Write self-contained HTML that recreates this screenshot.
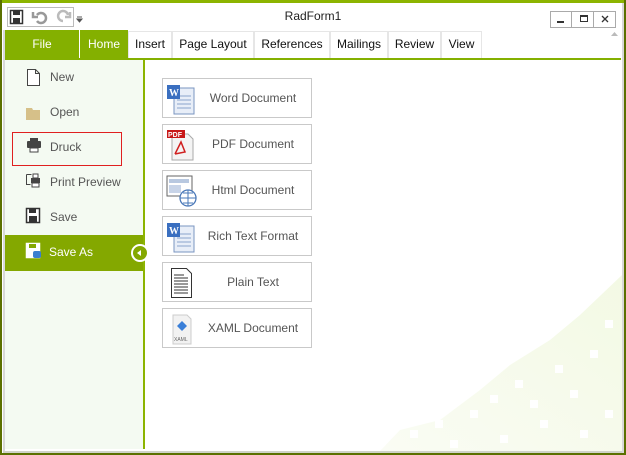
<!DOCTYPE html>
<html><head><meta charset="utf-8"><style>
*{margin:0;padding:0;box-sizing:border-box}
body{width:626px;height:455px;overflow:hidden;background:#fff;font-family:"Segoe UI","Liberation Sans",sans-serif;font-size:12px;color:#333;position:relative}
.abs{position:absolute}
.tab{position:absolute;top:31px;height:27px;background:#fff;border:1px solid #e6e6e6;border-bottom:none;line-height:25px;text-align:center;color:#111;font-size:12px}
.item{position:absolute;left:5px;width:138px;height:35px;line-height:35px;padding-left:45px;color:#555;font-size:12px}
.btn{position:absolute;left:162px;width:150px;height:40px;border:1px solid #c9c9c9;background:#fff;line-height:38px;font-size:12px;color:#555}
.btn span{position:absolute;left:0;right:0;padding-left:32px;text-align:center}
.btn svg{position:absolute;left:2px;top:3px}
</style></head><body>
<div class="abs" style="left:0;top:0;width:626px;height:3px;background:#8cb400"></div>
<div class="abs" style="left:0;top:0;width:2px;height:455px;background:#5b7000"></div>
<div class="abs" style="right:0;top:0;width:2px;height:455px;background:#5b7000"></div>
<div class="abs" style="left:0;bottom:0;width:626px;height:2px;background:#5b7000"></div>
<div class="abs" style="left:3px;bottom:2px;width:620px;height:2px;background:#cfd3c8"></div>
<div class="abs" style="right:2px;top:3px;width:2px;height:450px;background:#d8d8d8"></div>
<div class="abs" style="left:3px;top:30px;width:2px;height:421px;background:#d8d8d8"></div>
<div class="abs" style="left:7px;top:7px;width:67px;height:20px;border:1px solid #bbb"></div>
<svg class="abs" style="left:9px;top:9px" width="80" height="16">
<rect x="1.5" y="1.5" width="12" height="13" fill="#fff" stroke="#333" stroke-width="1.5"/><rect x="4" y="2" width="7" height="4" fill="#333"/><rect x="4" y="9" width="7" height="5" fill="#333"/>
<path d="M28 6 a5 5 0 1 1 0 6 M24 3 v5 h5" fill="none" stroke="#999" stroke-width="2.5"/>
<path d="M54 12 a5 5 0 1 1 5 -6 M61 3 v5 h-5" fill="none" stroke="#bbb" stroke-width="2.5"/>
<path d="M68 8 h5 M68 10 l2.5 3 l2.5 -3z" stroke="#555" fill="#555"/>
</svg>
<div class="abs" style="left:0;width:626px;top:9px;text-align:center;font-size:12px;color:#222">RadForm1</div>
<div class="abs" style="left:550px;top:11px;width:22px;height:17px;border:1px solid #aaa"></div>
<div class="abs" style="left:572px;top:11px;width:22px;height:17px;border:1px solid #aaa;border-left:none"></div>
<div class="abs" style="left:594px;top:11px;width:22px;height:17px;border:1px solid #aaa;border-left:none"></div>
<div class="abs" style="left:557px;top:21px;width:7px;height:2px;background:#333"></div>
<div class="abs" style="left:580px;top:15px;width:8px;height:7px;border:1px solid #333;border-top-width:2px"></div>
<svg class="abs" style="left:601px;top:15px" width="8" height="8"><path d="M1 1L7 7M7 1L1 7" stroke="#333" stroke-width="1.3"/></svg>
<svg class="abs" style="left:610px;top:31px" width="9" height="6"><path d="M1 5 L4.5 1 L8 5z" fill="#bbb"/></svg>
<div class="abs" style="left:5px;top:30px;width:74px;height:29px;background:#84b000;color:#fff;line-height:29px;text-align:center;font-size:12px">File</div>
<div class="abs" style="left:80px;top:30px;width:48px;height:29px;background:#84b000;color:#fff;line-height:29px;text-align:center">Home</div>
<div class="tab" style="left:128px;width:44px">Insert</div>
<div class="tab" style="left:172px;width:82px">Page Layout</div>
<div class="tab" style="left:254px;width:76px">References</div>
<div class="tab" style="left:330px;width:58px">Mailings</div>
<div class="tab" style="left:388px;width:53px">Review</div>
<div class="tab" style="left:441px;width:41px">View</div>
<div class="abs" style="left:5px;top:58px;width:616px;height:2px;background:#84b000"></div>
<svg class="abs" style="left:380px;top:270px" width="242" height="181">
<defs><linearGradient id="g" x1="0" y1="1" x2="1" y2="0"><stop offset="0" stop-color="#fafcf4"/><stop offset="1" stop-color="#f3f9e4"/></linearGradient></defs>
<path d="M0 181 L20 160 L60 150 L100 120 L130 95 L170 70 L200 45 L242 5 L242 181Z" fill="url(#g)"/>
<g fill="#fff">
<rect x="30" y="160" width="8" height="8"/><rect x="55" y="150" width="8" height="8"/><rect x="90" y="140" width="8" height="8"/><rect x="110" y="125" width="8" height="8"/><rect x="135" y="110" width="8" height="8"/><rect x="150" y="130" width="8" height="8"/><rect x="175" y="95" width="8" height="8"/><rect x="190" y="120" width="8" height="8"/><rect x="210" y="80" width="8" height="8"/><rect x="225" y="140" width="8" height="8"/><rect x="200" y="160" width="8" height="8"/><rect x="160" y="150" width="8" height="8"/><rect x="120" y="165" width="8" height="8"/><rect x="225" y="50" width="8" height="8"/><rect x="70" y="170" width="8" height="8"/>
</g></svg>
<div class="abs" style="left:5px;top:60px;width:138px;height:389px;background:#f4faf2"></div>
<div class="abs" style="left:143px;top:60px;width:2px;height:389px;background:#8cb400"></div>
<div class="item" style="top:60px">New</div>
<div class="item" style="top:95px">Open</div>
<div class="item" style="top:130px">Druck</div>
<div class="abs" style="left:12px;top:132px;width:110px;height:34px;border:1px solid #e02020"></div>
<div class="item" style="top:165px">Print Preview</div>
<div class="item" style="top:200px">Save</div>
<div class="item" style="top:235px;height:36px;background:#84a800;color:#fff;padding-left:44px">Save As</div>
<div class="abs" style="left:131px;top:244px;width:18px;height:18px;border-radius:50%;border:2px solid #fff;background:#84a800"></div>
<svg class="abs" style="left:136px;top:250px" width="6" height="6"><path d="M5 0 L1 3 L5 6z" fill="#fff"/></svg>
<svg class="abs" style="left:24px;top:66px" width="20" height="200">
<path d="M3.5 3.5 h8 l4 4 v12 h-12z M11.5 3.5 v4 h4" fill="#fff" stroke="#444"/>
<path d="M2 42 h6 l1 2 h7 v10 h-14z" fill="#d6c089"/>
<rect x="3" y="75" width="14" height="7" rx="1" fill="#444"/><rect x="6" y="72" width="8" height="3" fill="#444"/><rect x="6" y="82" width="8" height="4" fill="#fff" stroke="#444"/>
<path d="M2.5 108.5 h5 M2.5 108.5 v10 h4" fill="none" stroke="#444"/><rect x="7" y="112" width="9" height="5" fill="#444"/><rect x="8" y="117" width="7" height="4" fill="#fff" stroke="#444"/><rect x="9" y="108" width="5" height="4" fill="#fff" stroke="#444"/>
<rect x="2.5" y="142.5" width="13" height="14" fill="#fff" stroke="#333" stroke-width="1.5"/><rect x="5" y="143" width="7" height="4" fill="#333"/><rect x="5" y="150" width="8" height="6" fill="#333"/>
<rect x="2.5" y="177.5" width="13" height="14" fill="#fff" stroke="#fff" stroke-width="1.5"/><rect x="5" y="178" width="7" height="4" fill="#84a800"/><rect x="9" y="185" width="8" height="7" rx="2" fill="#3a7fd0"/>
</svg>
<div class="btn" style="top:78px"><svg width="34" height="34"><rect x="9" y="6" width="20" height="26" fill="#e8eef8" stroke="#7a95c0"/><path d="M12 14h14M12 18h14M12 22h14M12 26h14" stroke="#8aa4cc"/><rect x="2" y="3" width="13" height="14" fill="#3a6fc0"/><text x="4" y="14" font-size="10" font-weight="bold" fill="#fff" font-family="Liberation Serif">W</text></svg><span>Word Document</span></div>
<div class="btn" style="top:124px"><svg width="34" height="34"><path d="M7 6h16l5 5v21h-21z" fill="#f4f4f4" stroke="#aaa"/><rect x="2" y="2" width="18" height="8" fill="#c81818"/><text x="3" y="9" font-size="7" font-weight="bold" fill="#fff" font-family="Liberation Sans">PDF</text><path d="M10 26 l6-12 l4 10 l-10 2" fill="none" stroke="#d02020" stroke-width="1.5"/></svg><span>PDF Document</span></div>
<div class="btn" style="top:170px"><svg width="34" height="34"><rect x="2" y="2" width="25" height="20" fill="#fff" stroke="#666"/><rect x="4" y="5" width="20" height="4" fill="#b8c8e0"/><rect x="4" y="11" width="12" height="8" fill="#c8d4e8"/><circle cx="23" cy="24" r="8" fill="#fff" stroke="#4a78b8" stroke-width="1.3"/><path d="M15 24h16M23 16v16M18 19h10M18 29h10" stroke="#4a78b8"/></svg><span>Html Document</span></div>
<div class="btn" style="top:216px"><svg width="34" height="34"><rect x="9" y="6" width="20" height="26" fill="#e8eef8" stroke="#7a95c0"/><path d="M12 14h14M12 18h14M12 22h14M12 26h14" stroke="#8aa4cc"/><rect x="2" y="3" width="13" height="14" fill="#3a6fc0"/><text x="4" y="14" font-size="10" font-weight="bold" fill="#fff" font-family="Liberation Serif">W</text></svg><span>Rich Text Format</span></div>
<div class="btn" style="top:262px"><svg width="34" height="34"><path d="M6.5 2.5h15l5 5v24h-20z" fill="#fff" stroke="#333"/><path d="M9 9h10M9 12h14M9 15h14M9 18h14M9 21h14M9 24h14M9 27h14" stroke="#333"/></svg><span>Plain Text</span></div>
<div class="btn" style="top:308px"><svg width="34" height="34"><path d="M8 3h14l4 4v25h-18z" fill="#f2f2f2" stroke="#ccc"/><path d="M17 9l5 5-5 5-5-5z" fill="#3a7fd8"/><text x="9" y="29" font-size="5" fill="#666" font-family="Liberation Sans">XAML</text></svg><span>XAML Document</span></div>
</body></html>
